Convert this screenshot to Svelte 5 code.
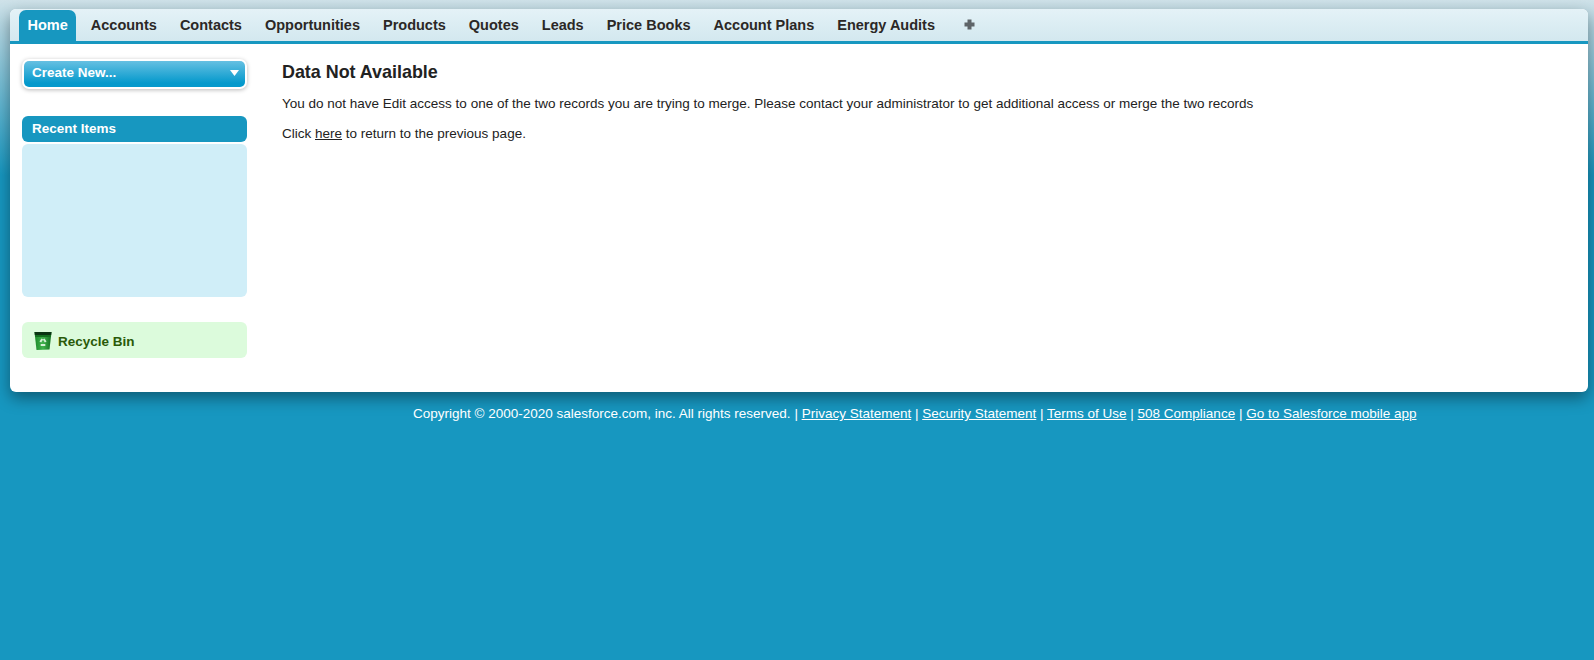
<script>
  const tabs = ['Accounts','Contacts','Opportunities','Products','Quotes','Leads','Price Books','Account Plans','Energy Audits'];
</script>

<div class="page">
  <div class="panel">
    <nav class="tabs">
      <a class="tab active" href="#home">Home</a>
      {#each tabs as t}
        <a class="tab" href="#tab">{t}</a>
      {/each}
      <span class="plus" aria-label="All Tabs">
        <svg width="11" height="11" viewBox="0 0 11 11"><path d="M3.500 0.500h4v3h3v4h-3v3h-4v-3h-3v-4h3z" fill="#5e6468"/></svg>
      </span>
    </nav>
    <div class="body">
      <aside class="side">
        <div class="create">
          <div class="create-btn">
            <span>Create New...</span>
            <svg width="9" height="6" viewBox="0 0 9 6"><path d="M0 0h9L4.500 6z" fill="#fff"/></svg>
          </div>
        </div>
        <div class="recent-head">Recent Items</div>
        <div class="recent-body"></div>
        <div class="bin">
          <svg class="bin-icon" width="18" height="20" viewBox="0 0 18 20">
            <defs>
              <linearGradient id="g" x1="0" y1="0" x2="1" y2="0">
                <stop offset="0" stop-color="#1c8a2a"/>
                <stop offset="0.5" stop-color="#3fb34c"/>
                <stop offset="1" stop-color="#146f20"/>
              </linearGradient>
            </defs>
            <path d="M0.500 1 17.500 1 15.500 18.500 2.500 19z" fill="url(#g)"/>
            <path d="M0.500 1 17.500 1 17.200 4 0.800 4z" fill="#0a3412"/>
            <path d="M1 4 17 4 16.800 6 1.200 6z" fill="#146f20"/>
            <path d="M6.300 11 8.300 8M9.700 8 11.700 11M11.300 14H6.700" fill="none" stroke="#d5f0d7" stroke-width="2"/>
          </svg>
          <span>Recycle Bin</span>
        </div>
      </aside>
      <main class="main">
        <h1>Data Not Available</h1>
        <p class="first">You do not have Edit access to one of the two records you are trying to merge. Please contact your administrator to get additional access or merge the two records</p>
        <p>Click <a href="#here">here</a> to return to the previous page.</p>
      </main>
    </div>
  </div>
  <footer class="foot">
    Copyright © 2000-2020 salesforce.com, inc. All rights reserved. | <a href="#p">Privacy Statement</a> | <a href="#s">Security Statement</a> | <a href="#t">Terms of Use</a> | <a href="#c">508 Compliance</a> | <a href="#m">Go to Salesforce mobile app</a>
  </footer>
</div>

<style>
  :global(body) {
    margin: 0;
    background: #1797c0;
  }
  .page {
    height: 660px;
    box-sizing: border-box;
    padding: 9px 6px 0 10px;
    overflow: hidden;
    font-family: "Liberation Sans", Arial, sans-serif;
    font-size: 13.5px;
    color: #222;
    background: linear-gradient(#cfe2e9 0, #1797c0 175px);
  }
  .panel {
    background: #fff;
    border-radius: 6px;
    box-shadow: 0 6px 16px rgba(0, 0, 0, 0.4);
    height: 383px;
  }
  .tabs {
    display: flex;
    align-items: stretch;
    height: 32px;
    padding: 1px 0 0 9px;
    box-sizing: border-box;
    background: linear-gradient(#e4f2f7, #d3e8ef);
    border-radius: 6px 6px 0 0;
  }
  .tab {
    display: block;
    padding: 7px 11px 0 12px;
    font-size: 14.5px;
    font-weight: bold;
    color: #2b2826;
    text-decoration: none;
  }
  .tab.active {
    color: #fff;
    background: #1797c0;
    border-radius: 7px 7px 0 0;
    padding: 7px 8.500px 0 8.500px;
    margin-right: 2.500px;
  }
  .plus {
    display: flex;
    align-items: center;
    margin-left: 17.500px;
    padding-bottom: 3px;
  }
  .body {
    display: flex;
    border-top: 3px solid #1797c0;
  }
  .side {
    width: 225px;
    flex: none;
    margin: 15px 0 0 12px;
  }
  .create {
    height: 30px;
    box-sizing: border-box;
    padding: 2px;
    background: #fff;
    border-radius: 7px;
    box-shadow: 0 1px 4px rgba(0, 0, 0, 0.28);
  }
  .create-btn {
    display: flex;
    align-items: center;
    justify-content: space-between;
    height: 26px;
    box-sizing: border-box;
    padding: 0 6px 3px 8px;
    border-radius: 5px;
    background: linear-gradient(#66c0e2, #0499cc 85%);
    color: #fff;
    font-weight: bold;
    font-size: 13.500px;
  }
  .recent-head {
    margin-top: 27px;
    height: 26px;
    line-height: 25px;
    padding-left: 10px;
    background: #1797c0;
    border-radius: 6px;
    color: #fff;
    font-weight: bold;
    font-size: 13.500px;
  }
  .recent-body {
    margin-top: 2px;
    height: 153px;
    background: #d0eef8;
    border-radius: 6px;
  }
  .bin {
    margin-top: 25px;
    height: 36px;
    display: flex;
    align-items: center;
    gap: 6px;
    padding-left: 12px;
    background: #dcfbdc;
    border-radius: 6px;
    color: #2a5a08;
    font-weight: bold;
    font-size: 13.500px;
  }
  .bin-icon {
    margin-top: 1px;
  }
  .bin span {
    padding-top: 2px;
  }
  .main {
    margin: 18px 0 0 35px;
    flex: 1;
  }
  h1 {
    margin: 0;
    font-size: 17.900px;
    line-height: 20px;
    color: #222;
  }
  p {
    margin: 0;
    font-size: 13.500px;
    line-height: 16px;
    margin-top: 14px;
  }
  p a {
    color: #222;
  }
  .foot {
    margin-top: 14px;
    padding-left: 403px;
    color: #fff;
    font-size: 13.500px;
    line-height: 16px;
    white-space: nowrap;
  }
  .foot a {
    color: #fff;
  }
</style>
